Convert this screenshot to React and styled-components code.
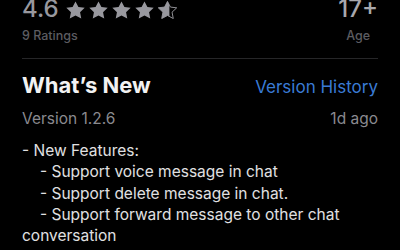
import React from 'react';
import styled, { createGlobalStyle } from 'styled-components';

const GlobalStyle = createGlobalStyle`
  html, body {
    margin: 0;
    padding: 0;
    background: #000;
  }
  body {
    font-family: Inter, "Noto Sans", "Liberation Sans", sans-serif;
    -webkit-font-smoothing: antialiased;
  }
`;

const Screen = styled.div`
  width: 400px;
  height: 250px;
  overflow: hidden;
  background: #000;
  padding: 0 22px;
  box-sizing: border-box;
`;

const InfoRow = styled.div`
  display: flex;
  justify-content: space-between;
  align-items: flex-start;
  margin-top: -6px;
  padding-bottom: 15px;
  border-bottom: 1px solid #262628;
`;

const InfoBlock = styled.div`
  display: flex;
  flex-direction: column;
  align-items: ${(p) => (p.$right ? 'center' : 'flex-start')};
  gap: 4px;
`;

const BigValue = styled.div`
  display: flex;
  align-items: center;
  gap: 7px;
  font-size: 24px;
  font-weight: 500;
  color: ${(p) => (p.$light ? '#a8a8ad' : '#98989e')};
  line-height: 30px;
`;

const Stars = styled.div`
  display: flex;
  gap: 4px;
  margin-top: 1px;
`;

const Caption = styled.div`
  font-size: 12.5px;
  color: #5c5c61;
  line-height: 15px;
  font-weight: 500;
`;

const HeaderRow = styled.div`
  display: flex;
  justify-content: space-between;
  align-items: baseline;
  margin-top: 13px;
`;

const Title = styled.h2`
  margin: 0;
  font-size: 22px;
  font-weight: 700;
  color: #f2f2f2;
  line-height: 26px;
`;

const Link = styled.a`
  font-size: 17px;
  color: #3a7bd5;
  text-decoration: none;
`;

const MetaRow = styled.div`
  display: flex;
  justify-content: space-between;
  margin-top: 11px;
  font-size: 15.5px;
  color: #8a8a8f;
  line-height: 20px;
`;

const Notes = styled.div`
  margin-top: 11px;
  font-size: 15.5px;
  color: #e0e0e2;
  line-height: 21.3px;
`;

const Line = styled.div`
  padding-left: ${(p) => (p.$indent ? '18px' : '0')};
`;

const STAR = '10,0.4 13.1,6.4 19.7,7.2 14.8,11.8 16.1,18.5 10,15.3 3.9,18.5 5.2,11.8 0.3,7.2 6.9,6.4';

const Star = ({ fill = 1, id }) => (
  <svg width="19" height="18" viewBox="0 0 20 19">
    <defs>
      <clipPath id={id}>
        <rect x="0" y="0" width={20 * fill} height="19" />
      </clipPath>
    </defs>
    {fill < 1 && (
      <polygon points={STAR} fill="none" stroke="#98989e" strokeWidth="1" strokeLinejoin="round" />
    )}
    <polygon points={STAR} fill="#98989e" clipPath={`url(#${id})`} />
  </svg>
);

export default function App() {
  return (
    <>
      <GlobalStyle />
      <Screen>
        <InfoRow>
          <InfoBlock>
            <BigValue>
              4.6
              <Stars>
                {[1, 1, 1, 1, 0.6].map((f, i) => (
                  <Star key={i} fill={f} id={`star-${i}`} />
                ))}
              </Stars>
            </BigValue>
            <Caption>9 Ratings</Caption>
          </InfoBlock>
          <InfoBlock $right>
            <BigValue $light>17+</BigValue>
            <Caption>Age</Caption>
          </InfoBlock>
        </InfoRow>
        <HeaderRow>
          <Title>What’s New</Title>
          <Link href="#">Version History</Link>
        </HeaderRow>
        <MetaRow>
          <span>Version 1.2.6</span>
          <span>1d ago</span>
        </MetaRow>
        <Notes>
          <Line>- New Features:</Line>
          <Line $indent>- Support voice message in chat</Line>
          <Line $indent>- Support delete message in chat.</Line>
          <Line $indent>- Support forward message to other chat</Line>
          <Line>conversation</Line>
        </Notes>
      </Screen>
    </>
  );
}
